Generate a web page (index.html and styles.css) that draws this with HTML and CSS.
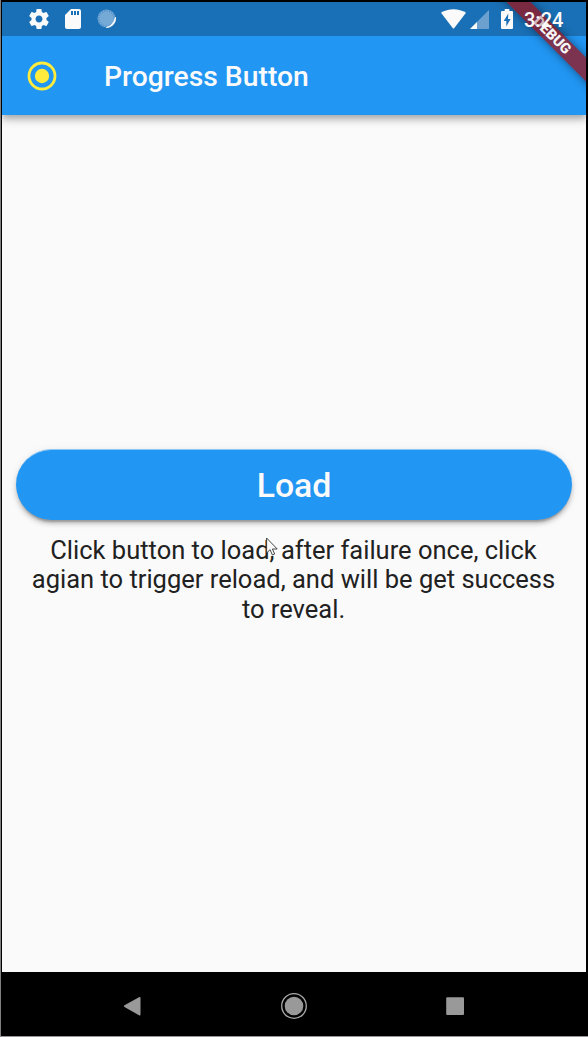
FILE: index.html
```html
<!DOCTYPE html>
<html lang="en">
<head>
<meta charset="utf-8">
<title>Progress Button</title>
<link rel="stylesheet" href="styles.css">
</head>
<body>
<div class="device">
  <div class="screen">
    <header class="status-bar">
      <svg class="gear" viewBox="2 2 20 20"><path fill="#fafafa" d="M19.43 12.98c.04-.32.07-.64.07-.98s-.03-.66-.07-.98l2.11-1.65c.19-.15.24-.42.12-.64l-2-3.46c-.12-.22-.39-.3-.61-.22l-2.49 1c-.52-.4-1.08-.73-1.69-.98l-.38-2.65C14.46 2.18 14.25 2 14 2h-4c-.25 0-.46.18-.49.42l-.38 2.65c-.61.25-1.17.59-1.69.98l-2.49-1c-.23-.09-.49 0-.61.22l-2 3.46c-.13.22-.07.49.12.64l2.11 1.65c-.04.32-.07.65-.07.98s.03.66.07.98l-2.11 1.65c-.19.15-.24.42-.12.64l2 3.46c.12.22.39.3.61.22l2.49-1c.52.4 1.08.73 1.69.98l.38 2.65c.03.24.24.42.49.42h4c.25 0 .46-.18.49-.42l.38-2.65c.61-.25 1.17-.59 1.69-.98l2.49 1c.23.09.49 0 .61-.22l2-3.46c.12-.22.07-.49-.12-.64l-2.11-1.65zM12 15.5c-1.93 0-3.5-1.57-3.5-3.5s1.57-3.500 3.5-3.500 3.500 1.570 3.500 3.500-1.570 3.500-3.500 3.500z"/></svg>
      <svg class="sd-card" viewBox="4 2 16 20"><path fill="#fafafa" d="M18 2h-8L4.020 8 4 20c0 1.100.9 2 2 2h12c1.100 0 2-.9 2-2V4c0-1.100-.9-2-2-2zm-6 6h-2V4h2v4zm3 0h-2V4h2v4zm3 0h-2V4h2v4z"/></svg>
      <svg class="sync" viewBox="0 0 20 20"><circle cx="9.500" cy="9.500" r="9" fill="#75a9d6"/><circle cx="9.500" cy="9.500" r="7.800" fill="none" stroke="#4f8fc8" stroke-width="2" stroke-dasharray="1 1.450"/><path d="M18.500 8A9 9 0 0 1 9.500 18.500Q16 17 18.500 8Z" fill="#fafafa" stroke="#fafafa" stroke-width=".8"/></svg>
      <div class="status-right">
        <svg class="wifi" viewBox="0 0 25 20"><path fill="#fafafa" d="M0 3.800C7-1 18-1 25 3.800L13.300 19q-.8 1-1.600 0Z"/></svg>
        <svg class="signal" viewBox="0 0 19 19"><path fill="#6ca1cf" d="M0 19 19 0v19z"/><path fill="#fafafa" d="M0 19 7 12v7z"/></svg>
        <svg class="battery" viewBox="0 0 12 20"><path fill="#fafafa" d="M1 2h2.700V0h4.600V2H11q1 0 1 1v16q0 1-1 1H1q-1 0-1-1V3q0-1 1-1z"/><path fill="#1a6fb5" d="M7.300 4.500 2.700 12h2.600v5.500L9.600 10H7z"/></svg>
        <span class="clock">3:24</span>
      </div>
    </header>
    <div class="app-bar">
      <svg class="radio" viewBox="0 0 30 30"><circle cx="15" cy="15" r="13" fill="none" stroke="#ffeb3b" stroke-width="2.800"/><circle cx="15" cy="15" r="7.200" fill="#ffeb3b"/></svg>
      <h1 class="title">Progress Button</h1>
    </div>
    <main class="content">
      <button class="load-button">Load</button>
      <p class="hint">Click button to load, after failure once, click<br>agian to trigger reload, and will be get success<br>to reveal.</p>
    </main>
    <div class="banner-clip"><div class="banner"><span class="banner-dim">D</span>EBUG</div></div>
    <svg class="cursor" viewBox="0 0 12 19"><path fill="#fafafa" stroke="#333" stroke-width=".9" d="M.6 1v15l3.500-3.300 2.300 5.300 2.300-1-2.300-5h4.800z"/></svg>
  </div>
  <nav class="nav-bar">
    <svg class="nav-icon" viewBox="0 0 30 30"><path fill="#999" d="M6.500 14.200 21 6.200q1.500-.7 1.500 1v16q0 1.700-1.500 1L6.500 16q-1.500-.9 0-1.800z"/></svg>
    <svg class="nav-icon" viewBox="0 0 30 30"><circle cx="15" cy="15" r="12.300" fill="none" stroke="#aaa" stroke-width="1.300"/><circle cx="15" cy="15" r="9.300" fill="#999"/></svg>
    <svg class="nav-icon" viewBox="0 0 30 30"><rect x="6.200" y="6.200" width="17.800" height="17.800" rx="1" fill="#999"/></svg>
  </nav>
</div>
</body>
</html>
```
FILE: styles.css
```css
* { box-sizing: border-box; }
body { margin: 0; background: #000; font-family: Roboto, sans-serif; }
svg { display: block; flex: none; }
.device {
  display: flex; flex-direction: column; height: 1037px; overflow: hidden;
  padding: 2px 2px 0 1px; border-left: 1px solid #808080; border-bottom: 1px solid #989498;
}
.screen { position: relative; flex: 1; display: flex; flex-direction: column; background: #fafafa; overflow: hidden; }
.status-bar { position: relative; z-index: 4; display: flex; align-items: center; height: 34px; padding: 0 22px 0 27px; }
.gear { width: 20px; height: 20px; }
.sd-card { width: 16px; height: 20px; margin-left: 16px; }
.sync { width: 20px; height: 20px; margin-left: 16px; }
.status-right { display: flex; align-items: center; margin-left: auto; }
.wifi { width: 25px; height: 20px; }
.signal { width: 19px; height: 19px; margin-left: 4px; }
.battery { width: 12px; height: 20px; margin-left: 12px; }
.clock { margin: 2px 0 0 11px; width: 40px; font-size: 20px; line-height: 34px; font-weight: 500; color: #fafafa; white-space: nowrap; }
.app-bar {
  display: flex; align-items: center; height: 113px; margin-top: -34px; padding: 34px 0 0 25px; z-index: 1;
  background: linear-gradient(#1a70b6 34px, #2196f3 34px);
  box-shadow: 0 3px 6px -1px rgba(0,0,0,.2), 0 6px 7px rgba(0,0,0,.14), 0 1px 14px rgba(0,0,0,.08);
}
.radio { width: 30px; height: 30px; }
.title { margin: 2px 0 0 47px; font-size: 28.300px; font-weight: 500; line-height: 34px; color: #fafafa; white-space: nowrap; }
.content { flex: 1; display: flex; flex-direction: column; padding: 334px 14px 0; }
.load-button {
  height: 71px; border: 0; border-top: 1px solid #8dc6f5; padding: 0; border-radius: 36px; background: #2196f3; color: #fafafa;
  font: 500 33.800px/69px Roboto, sans-serif;
  box-shadow: 0 4px 2px -2px rgba(0,0,0,.22), 0 4px 4px rgba(0,0,0,.16), 0 2px 8px rgba(0,0,0,.11);
}
.hint { margin: 15px 0 0; text-align: center; font-size: 25.500px; line-height: 29.800px; padding: .6px 1px 0 0; color: #212121; white-space: nowrap; }
.banner-clip { position: absolute; z-index: 3; top: 0; right: 0; width: 120px; height: 120px; overflow: hidden; }
.banner {
  position: absolute; left: 6px; top: 25px; width: 160px; height: 17px; transform: rotate(45deg);
  background: rgba(154,18,24,.75); box-shadow: 0 0 10px rgba(0,0,0,.45);
  color: #f5f5f5; font-size: 14.500px; font-weight: 900; line-height: 17px; text-align: center;
}
.banner-dim { opacity: .7; }
.cursor { position: absolute; left: 264px; top: 535px; width: 12px; height: 19px; z-index: 2; }
.nav-bar { display: flex; justify-content: center; align-items: center; gap: 131px; height: 64px; padding-top: 4px; background: #000; }
.nav-icon { width: 30px; height: 30px; }
```
